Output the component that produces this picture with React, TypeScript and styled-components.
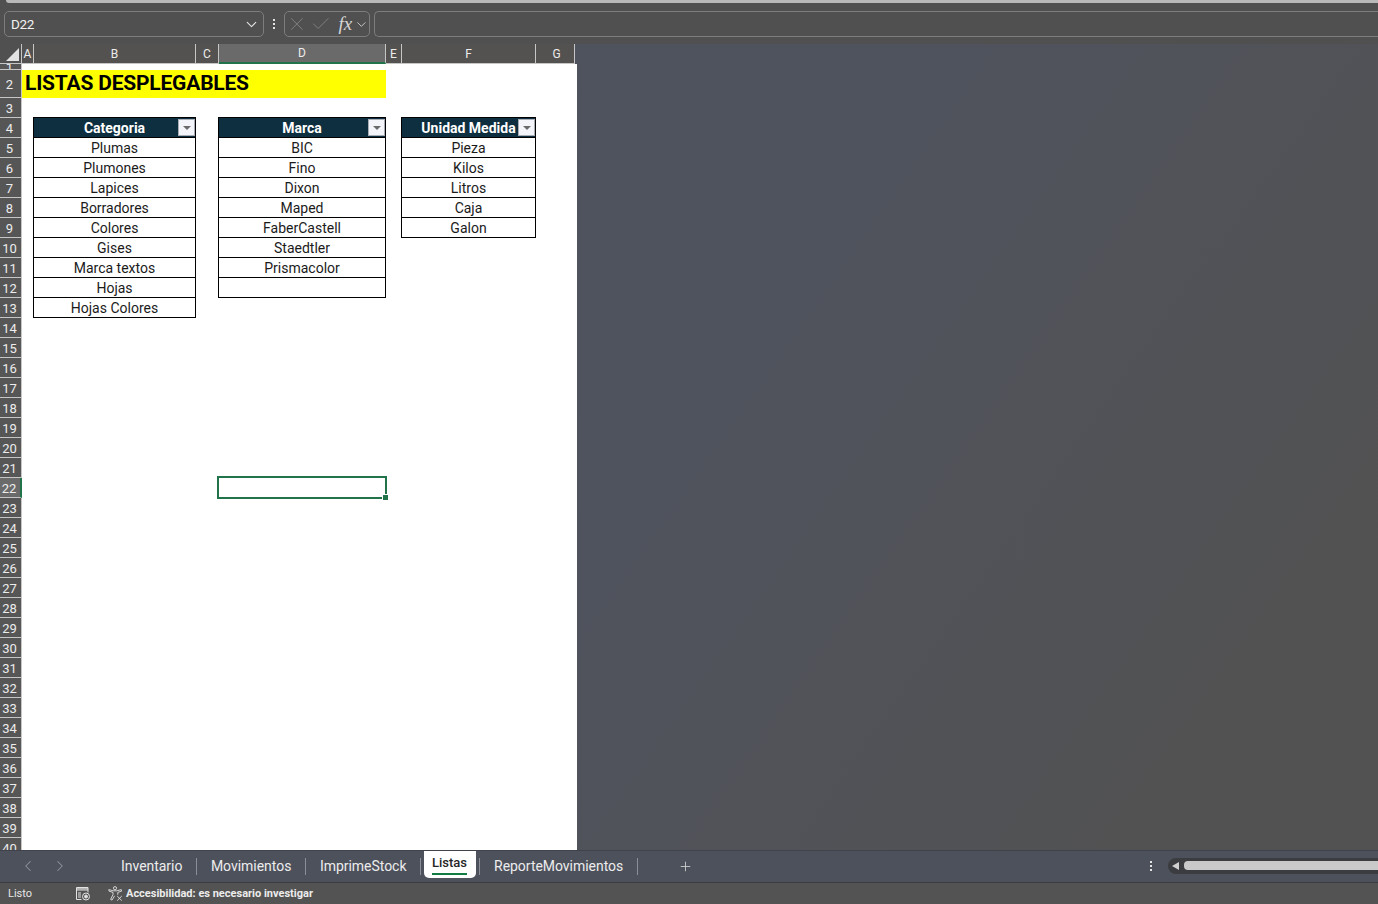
import { Check, ChevronDown, ChevronLeft, ChevronRight, Plus, X } from 'lucide-react';
import styled, { createGlobalStyle } from 'styled-components';

const COLUMNS = ['A', 'B', 'C', 'D', 'E', 'F', 'G'];
const ROW_COUNT = 40;

const TABLES = [
  {
    col: 3,
    title: 'Categoria',
    items: ['Plumas', 'Plumones', 'Lapices', 'Borradores', 'Colores', 'Gises', 'Marca textos', 'Hojas', 'Hojas Colores'],
  },
  {
    col: 5,
    title: 'Marca',
    items: ['BIC', 'Fino', 'Dixon', 'Maped', 'FaberCastell', 'Staedtler', 'Prismacolor', ''],
  },
  {
    col: 7,
    title: 'Unidad Medida',
    items: ['Pieza', 'Kilos', 'Litros', 'Caja', 'Galon'],
  },
];

const GlobalStyle = createGlobalStyle`
  html, body {
    margin: 0;
    padding: 0;
    background: #505050;
    font-family: Roboto, "Noto Sans", sans-serif;
  }
`;

const Window = styled.div`
  width: 1378px;
  height: 904px;
  display: flex;
  flex-direction: column;
  overflow: hidden;
  background: #505050;
`;

const TopStrip = styled.div`
  height: 3px;
  flex-shrink: 0;
  margin-left: 6px;
  background: #b9b9b9;
  border-bottom-left-radius: 4px;
`;

const FormulaBar = styled.div`
  height: 41px;
  flex-shrink: 0;
  box-sizing: border-box;
  padding: 8px 0 7px 4px;
  display: flex;
  align-items: stretch;
  background: #505050;
`;

const NameBox = styled.div`
  width: 260px;
  box-sizing: border-box;
  padding: 0 3px 0 6px;
  display: flex;
  align-items: center;
  justify-content: space-between;
  border: 1px solid #7d7d7d;
  border-radius: 5px;
  color: #f2f2f2;
  font-size: 13.5px;
  letter-spacing: -0.3px;
`;

const Kebab = styled.div`
  width: 20px;
  display: flex;
  flex-direction: column;
  align-items: center;
  justify-content: center;
  gap: 2px;

  i {
    width: 2px;
    height: 2px;
    background: #e4e4e4;
  }
`;

const FormulaButtons = styled.div`
  width: 86px;
  box-sizing: border-box;
  padding: 0 0 0 1px;
  display: flex;
  align-items: center;
  gap: 2px;
  border: 1px solid #7d7d7d;
  border-radius: 5px;
  color: #7f7f7f;
`;

const FxLabel = styled.span`
  margin-left: 5px;
  color: #d6d6d6;
  font-family: "Liberation Serif", serif;
  font-style: italic;
  font-size: 19px;
`;

const FormulaInput = styled.div`
  flex: 1;
  margin-left: 4px;
  border: 1px solid #7d7d7d;
  border-right: none;
  border-radius: 5px 0 0 5px;
`;

const SheetArea = styled.div`
  flex: 1;
  min-height: 0;
  overflow: hidden;
  background: linear-gradient(125deg, #4d525d 0%, #4f535e 45%, #525252 90%);
`;

const SheetGrid = styled.div`
  width: 577px;
  display: grid;
  grid-template-columns: 22px 12px 162px 23px 167px 16px 134px 39px 2px;
  grid-template-rows: 20px 6px 28px repeat(${ROW_COUNT - 2}, 20px);
`;

const Paper = styled.div`
  grid-column: 2 / -1;
  grid-row: 2 / -1;
  background: #ffffff;
`;

const Corner = styled.div`
  grid-column: 1;
  grid-row: 1;
  display: flex;
  align-items: flex-end;
  justify-content: flex-end;
  padding: 0 2px 2px 0;
  background: #505050;
  box-sizing: border-box;
  border-bottom: 1px solid #c6c6c6;
  border-right: 1px solid #c6c6c6;
`;

const ColHead = styled.div<{ $col: number; $active: boolean }>`
  grid-column: ${(p) => p.$col};
  grid-row: 1;
  box-sizing: border-box;
  display: flex;
  align-items: center;
  justify-content: center;
  padding-left: ${(p) => (p.$col === 8 ? '3px' : '0')};
  color: #ececec;
  font-size: 12px;
  background: ${(p) => (p.$active ? '#6a6a6a' : '#545250')};
  border-right: 1px solid #c6c6c6;
  border-bottom: ${(p) => (p.$active ? '2px solid #21734a' : '1px solid #c6c6c6')};
`;

const RowHead = styled.div<{ $row: number; $active: boolean }>`
  grid-column: 1;
  grid-row: ${(p) => p.$row + 1};
  box-sizing: border-box;
  display: flex;
  align-items: center;
  justify-content: center;
  overflow: hidden;
  padding: 1px 2px 0 0;
  color: #ececec;
  font-size: 13px;
  background: ${(p) => (p.$active ? '#6a6a6a' : '#565656')};
  border-bottom: 1px solid #c6c6c6;
  border-right: ${(p) => (p.$active ? '2px solid #21734a' : '1px solid #c6c6c6')};
`;

const Title = styled.div`
  grid-column: 2 / 6;
  grid-row: 3;
  padding: 0 0 3px 3px;
  display: flex;
  align-items: center;
  background: #ffff00;
  color: #000000;
  font-size: 21px;
  font-weight: 700;
  letter-spacing: -0.2px;
  white-space: nowrap;
`;

const TableCell = styled.div<{ $col: number; $row: number }>`
  grid-column: ${(p) => p.$col};
  grid-row: ${(p) => p.$row + 1};
  margin-left: -1px;
  display: flex;
  align-items: center;
  justify-content: center;
  color: #1b1b1b;
  font-size: 14px;
  background: #ffffff;
  border: 1px solid #000000;
  border-top: none;
`;

const TableHead = styled(TableCell)`
  position: relative;
  margin-top: -1px;
  border-top: 1px solid #000000;
  background: #0e2f40;
  color: #ffffff;
  font-weight: 700;
`;

const FilterButton = styled.span`
  position: absolute;
  top: 1px;
  right: 0;
  width: 17px;
  height: 17px;
  box-sizing: border-box;
  display: flex;
  align-items: center;
  justify-content: center;
  background: #f3f5fa;
  border: 1px solid #a9adb5;

  &::after {
    content: '';
    border-left: 4px solid transparent;
    border-right: 4px solid transparent;
    border-top: 4px solid #6b6b6b;
  }
`;

const Selection = styled.div`
  position: relative;
  grid-column: 5;
  grid-row: 23;
  margin: -2px -1px -1px -2px;
  border: 2px solid #21734a;
`;

const FillHandle = styled.span`
  position: absolute;
  right: -3px;
  bottom: -3px;
  width: 5px;
  height: 5px;
  background: #21734a;
  outline: 1px solid #ffffff;
`;

const TabBar = styled.div`
  height: 33px;
  box-sizing: border-box;
  flex-shrink: 0;
  display: flex;
  align-items: flex-start;
  background: #4d515c;
  border-top: 1px solid #3f424a;
  border-bottom: 1px solid #3a3c42;
`;

const NavArrows = styled.div`
  width: 107px;
  height: 30px;
  padding-left: 19px;
  box-sizing: border-box;
  display: flex;
  align-items: center;
  gap: 14px;
  color: #8f939c;
`;

const Tab = styled.div`
  height: 30px;
  padding: 0 13.5px 0 14px;
  display: flex;
  align-items: center;
  color: #ececec;
  font-size: 14px;
  letter-spacing: -0.03px;
`;

const TabDivider = styled.span`
  width: 1px;
  height: 17px;
  margin-top: 7px;
  background: #8b8e96;
`;

const ActiveTab = styled.div`
  position: relative;
  height: 27px;
  margin: 0 3px;
  padding: 0 9px 5px 8px;
  box-sizing: border-box;
  display: flex;
  align-items: center;
  color: #262626;
  font-size: 13px;
  font-weight: 500;
  background: #ffffff;
  border-radius: 0 0 5px 5px;

  &::after {
    content: '';
    position: absolute;
    left: 8px;
    right: 9px;
    bottom: 3px;
    height: 2px;
    background: #107c41;
  }
`;

const AddSheet = styled.div`
  margin-left: 40px;
  height: 30px;
  display: flex;
  align-items: center;
  color: #d8d8d8;
`;

const TabTools = styled.div`
  margin-left: auto;
  height: 29px;
  display: flex;
  align-items: center;
`;

const ScrollTrack = styled.div`
  width: 207px;
  height: 16px;
  margin-left: 7px;
  margin-right: -1px;
  padding-left: 4px;
  display: flex;
  align-items: center;
  gap: 5px;
  background: #3b3c40;
  border-radius: 8px 0 0 8px;
`;

const ScrollArrow = styled.span`
  border-top: 4px solid transparent;
  border-bottom: 4px solid transparent;
  border-right: 7px solid #d0d0d0;
`;

const ScrollThumb = styled.span`
  flex: 1;
  height: 9px;
  background: #c9c9c9;
  border-radius: 4px 0 0 4px;
`;

const StatusBar = styled.div`
  height: 21px;
  flex-shrink: 0;
  padding-left: 8px;
  display: flex;
  align-items: center;
  background: #535353;
  color: #e6e6e6;
  font-size: 11px;
`;

const StatusText = styled.span`
  width: 67px;
`;

const StatusIcon = styled.svg`
  flex-shrink: 0;
  color: #e2e2e2;
`;

const StatusGap = styled.span`
  width: 17px;
`;

const AccessibilityNote = styled.span`
  margin-left: 3px;
  font-weight: 700;
  color: #ececec;
`;

function CornerArrow(): JSX.Element {
  return (
    <svg width="13" height="13" viewBox="0 0 13 13">
      <path d="M13 0V13H0Z" fill="#e2e2e2" />
    </svg>
  );
}

function MacroIcon(): JSX.Element {
  return (
    <StatusIcon width="16" height="14" viewBox="0 0 16 14" fill="none" stroke="currentColor">
      <path d="M1.5 12.5V.5h11.5v5" />
      <path d="M1.5 3h11.5M1.5 1.8h11.5" />
      <path d="M3 6h3M3 8h3M3 10h3M1.5 12.5h5" />
      <circle cx="11" cy="9.5" r="3.5" />
      <circle cx="11" cy="9.5" r="1.5" fill="currentColor" />
    </StatusIcon>
  );
}

function AccessibilityIcon(): JSX.Element {
  return (
    <StatusIcon width="15" height="15" viewBox="0 0 15 15" fill="none" stroke="currentColor" strokeWidth="0.9">
      <circle cx="7" cy="2.2" r="1.6" />
      <path d="M.8 3.6l4.4 1.2h3.6l4.4-1.2.4 1.5-3.8 1.3v2.4M5 6.4L1 5.1.8 3.6M5 6.4v2.2L2.6 13.4l1.4.7 2.6-4.3" />
      <path d="M9.2 10l4.6 4.6M13.8 10l-4.6 4.6" />
    </StatusIcon>
  );
}

export default function App(): JSX.Element {
  return (
    <Window>
      <GlobalStyle />
      <TopStrip />
      <FormulaBar>
        <NameBox>
          D22
          <ChevronDown size={17} strokeWidth={1.5} color="#e4e4e4" />
        </NameBox>
        <Kebab>
          <i />
          <i />
          <i />
        </Kebab>
        <FormulaButtons>
          <X size={22} strokeWidth={1.1} />
          <Check size={22} strokeWidth={1.1} />
          <FxLabel>fx</FxLabel>
          <ChevronDown size={15} strokeWidth={1.4} color="#d6d6d6" />
        </FormulaButtons>
        <FormulaInput />
      </FormulaBar>

      <SheetArea>
        <SheetGrid>
          <Paper />
          <Corner>
            <CornerArrow />
          </Corner>
          {COLUMNS.map((name, i) => (
            <ColHead key={name} $col={i + 2} $active={name === 'D'}>
              {name}
            </ColHead>
          ))}
          {Array.from({ length: ROW_COUNT }, (_, i) => (
            <RowHead key={i} $row={i + 1} $active={i + 1 === 22}>
              {i + 1}
            </RowHead>
          ))}
          <Title>LISTAS DESPLEGABLES</Title>
          {TABLES.map((table) => (
            <TableHead key={table.title} $col={table.col} $row={4}>
              {table.title}
              <FilterButton />
            </TableHead>
          ))}
          {TABLES.flatMap((table) =>
            table.items.map((item, i) => (
              <TableCell key={table.title + i} $col={table.col} $row={5 + i}>
                {item}
              </TableCell>
            )),
          )}
          <Selection>
            <FillHandle />
          </Selection>
        </SheetGrid>
      </SheetArea>

      <TabBar>
        <NavArrows>
          <ChevronLeft size={18} strokeWidth={1.4} />
          <ChevronRight size={18} strokeWidth={1.4} />
        </NavArrows>
        <Tab>Inventario</Tab>
        <TabDivider />
        <Tab>Movimientos</Tab>
        <TabDivider />
        <Tab>ImprimeStock</Tab>
        <TabDivider />
        <ActiveTab>Listas</ActiveTab>
        <TabDivider />
        <Tab>ReporteMovimientos</Tab>
        <TabDivider />
        <AddSheet>
          <Plus size={15} strokeWidth={1.3} />
        </AddSheet>
        <TabTools>
          <Kebab>
            <i />
            <i />
            <i />
          </Kebab>
          <ScrollTrack>
            <ScrollArrow />
            <ScrollThumb />
          </ScrollTrack>
        </TabTools>
      </TabBar>

      <StatusBar>
        <StatusText>Listo</StatusText>
        <MacroIcon />
        <StatusGap />
        <AccessibilityIcon />
        <AccessibilityNote>Accesibilidad: es necesario investigar</AccessibilityNote>
      </StatusBar>
    </Window>
  );
}
